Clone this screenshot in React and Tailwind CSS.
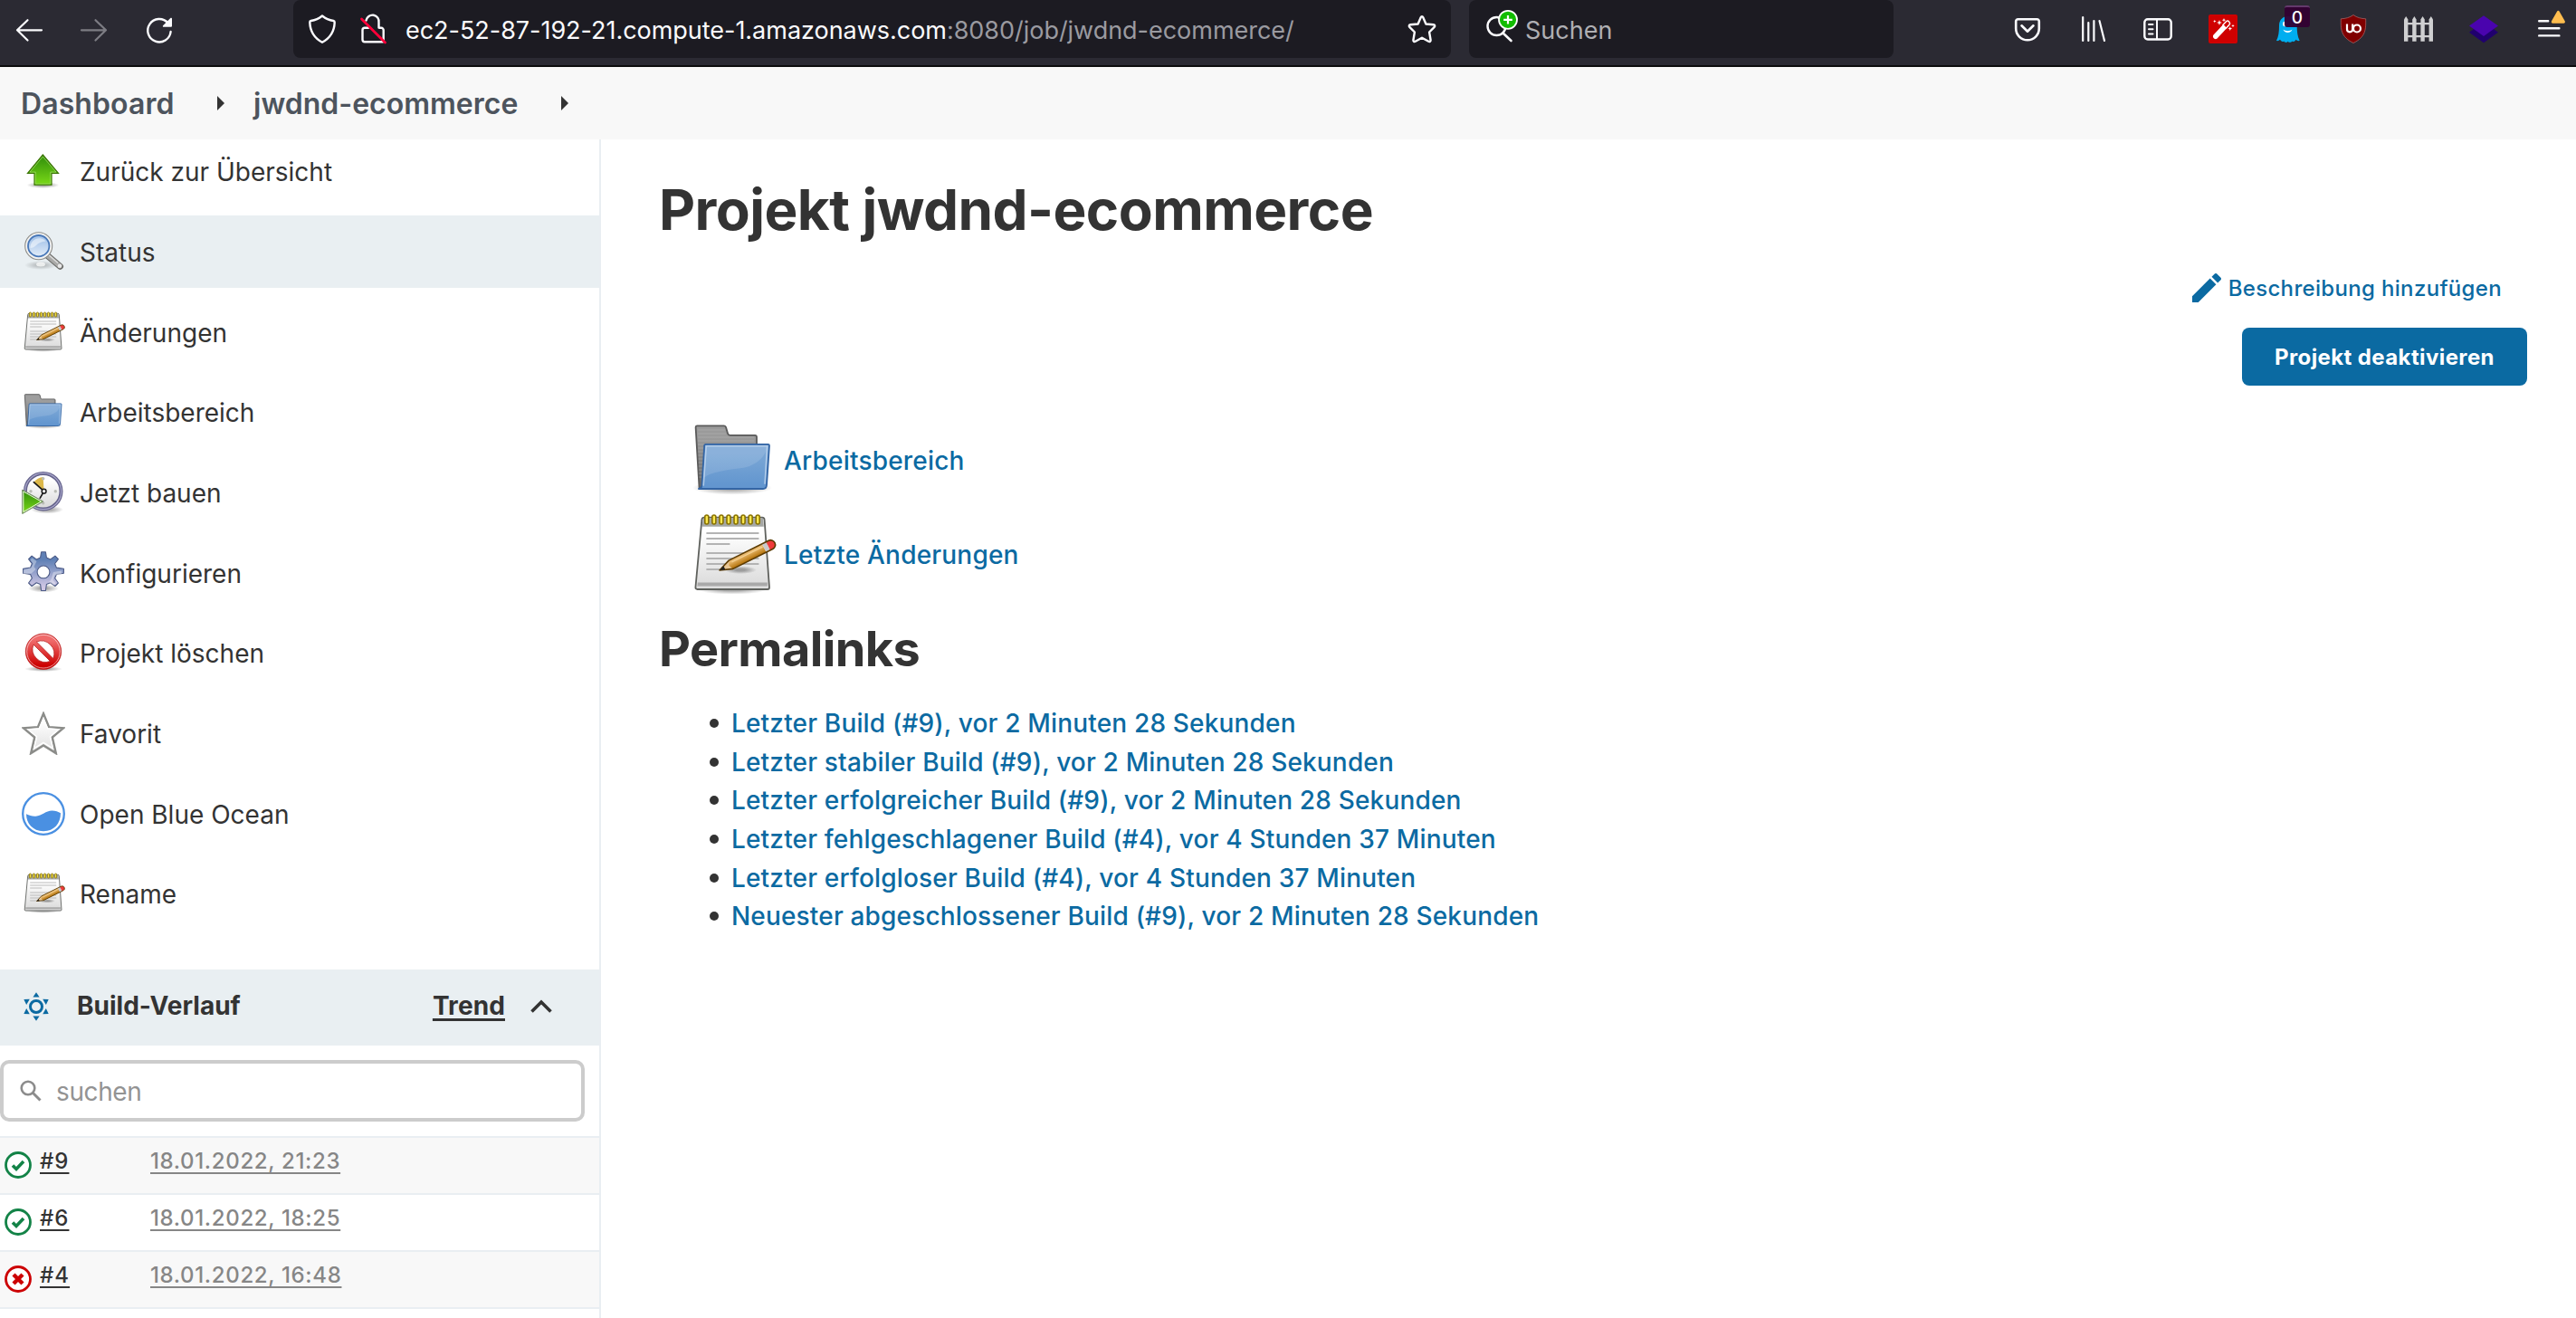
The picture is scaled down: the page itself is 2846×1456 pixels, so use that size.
import React from "react";

/* ---------- Browser toolbar icons ---------- */

const line = { fill: "none", stroke: "#fbfbfe", strokeWidth: 2.2, strokeLinecap: "round", strokeLinejoin: "round" };

function BarIcon({ children, className = "" }) {
  return (
    <svg viewBox="0 0 32 32" className={`size-8 shrink-0 overflow-visible ${className}`} aria-hidden="true">
      {children}
    </svg>
  );
}

const BackIcon = () => (
  <BarIcon><path {...line} d="M30 17.3H3M14.5 6.2 3 17.3l11.5 11.2" /></BarIcon>
);
const ForwardIcon = () => (
  <BarIcon className="opacity-40"><path {...line} d="M2 17.3h27M17.5 6.2 29 17.3 17.5 28.5" /></BarIcon>
);
const ReloadIcon = () => (
  <BarIcon>
    <path {...line} strokeWidth="2.4" d="M28.6 19a12.7 12.7 0 1 1-3.2-9.8" />
    <path fill="#fbfbfe" d="M30 4.6v8.2a1 1 0 0 1-1 1h-8.2c-.9 0-1.3-1-.7-1.6l8.2-8.2c.6-.6 1.7-.2 1.7.6z" />
  </BarIcon>
);
const ShieldIcon = () => (
  <BarIcon><path {...line} strokeWidth="2.4" d="M16 1.5c-3.8 3.1-8 4.8-12.5 5.5-.8.2-1.3.8-1.2 1.7.3 9.4 4.5 17 13.7 22 9.2-5 13.4-12.6 13.7-22 0-.9-.5-1.5-1.3-1.7C23.9 6.3 19.8 4.6 16 1.5z" /></BarIcon>
);
const LockIcon = () => (
  <BarIcon>
    <path {...line} strokeWidth="2.4" d="M8.5 6.5A7 7 0 0 1 22.5 9v5.5M23 14.8h2.2a2.5 2.5 0 0 1 2.5 2.5V28M27 30.3H7a2.5 2.5 0 0 1-2.500-2.500V17.300A2.500 2.500 0 0 1 7 14.800h4" />
    <path d="M3.500 5 29.500 31" stroke="#ff0039" strokeWidth="2.8" strokeLinecap="round" />
  </BarIcon>
);
const StarIcon = () => (
  <BarIcon><path {...line} strokeWidth="2.4" d="M14.700 3.200c.6-1.200 2-1.200 2.600 0l3.100 7.300 8.300.8c1.500.2 2 1.500 1 2.500l-5.600 5.700 1.500 8.700c.2 1.400-1 2.300-2.300 1.600L16 25.700l-7.300 4.100c-1.300.7-2.500-.2-2.300-1.600l1.500-8.700-5.600-5.700c-1-1-.5-2.300 1-2.500l8.300-.8z" /></BarIcon>
);
const SearchAddIcon = () => (
  <svg viewBox="0 0 40 40" className="size-10 shrink-0 overflow-visible" aria-hidden="true">
    <circle cx="13.500" cy="17" r="10" fill="none" stroke="#fbfbfe" strokeWidth="2.400" />
    <path d="m20.500 24.500 9 8.500" stroke="#fbfbfe" strokeWidth="2.600" strokeLinecap="round" />
    <circle cx="26" cy="9.800" r="10" fill="#12bc00" stroke="#fff" strokeWidth="1.800" />
    <path d="M26 5v9.600M21.200 9.800h9.600" stroke="#fff" strokeWidth="2.200" />
  </svg>
);
const PocketIcon = () => (
  <BarIcon>
    <path {...line} strokeWidth="2.600" d="M5.500 5.300h21a2.300 2.300 0 0 1 2.300 2.300V15.500a12.800 12.800 0 0 1-25.600 0V7.600a2.300 2.300 0 0 1 2.300-2.300z" />
    <path {...line} strokeWidth="2.600" d="m9.500 12.300 6.500 6.400 6.500-6.400" />
  </BarIcon>
);
const LibraryIcon = () => (
  <BarIcon><path {...line} d="M5.200 3v26M11.300 9v20M17.400 7v22M23.500 7l5.500 22" /></BarIcon>
);
const SidebarIcon = () => (
  <BarIcon>
    <rect {...line} strokeWidth="2.400" x="1.300" y="5.200" width="29.400" height="22.300" rx="3.500" />
    <path {...line} strokeWidth="2" d="M15 5.500v21.800M6 11h4.500M6 16.300h4.500M6 21.600h4.500" />
  </BarIcon>
);
const WandIcon = () => (
  <BarIcon>
    <rect width="32" height="32" rx="2" fill="#cf0000" />
    <path d="m5.300 22.700 11.200-12 4 4-11.200 12c-2.500 1.600-5.400-1.300-4-4z" fill="#fff" />
    <path d="m16 11.500 3.800-4c1.900-1.500 4.800 1.400 3.200 3.700l-3.700 4z" fill="#cf0000" stroke="#fff" strokeWidth="1.400" />
    <path fill="#fff" d="m12 6 .8 2.200 2.200.8-2.200.8L12 12l-.8-2.200L9 9l2.200-.8zM17 4l.6 1.600 1.600.6-1.600.6L17 8.400l-.6-1.600-1.600-.6 1.600-.6zM6.800 5.800l.5 1.200 1.200.5-1.200.5-.5 1.200L6.300 8l-1.200-.5L6.300 7zM23.800 13.200l.7 1.700 1.700.7-1.700.7-.7 1.700-.7-1.700-1.700-.7 1.700-.7zM27 10.700l.5 1.300 1.300.5-1.300.5-.5 1.300-.5-1.300-1.300-.5 1.300-.5z" />
  </BarIcon>
);
function GhostIcon() {
  return (
    <div className="relative size-8 shrink-0">
      <BarIcon>
        <path fill="#00aef0" d="M16 2c-6.500 0-10 4.500-10 10.500 0 6-.5 11.500-3 16.500 1.700.5 3-.4 4-1.300 1 1.700 2.700 3 4.400 1.700.8 1.800 3 2 4.300.3 1.400 1.700 3.500 1.500 4.500-.3 1.500 1.300 3.500.2 4.300-1.700 1 1 2.300 1.800 4.200 1.300-2.500-5-3-10.500-3-16.500C25.700 6.500 22.500 2 16 2z" />
        <ellipse cx="12" cy="10.500" rx="1.900" ry="2.800" fill="#fff" />
        <path d="M10.500 16.500c1 4.500 9 4.500 10 0-2.500 2.300-7.500 2.300-10 0z" fill="#fff" />
      </BarIcon>
      <span className="absolute -top-[10px] left-3 flex h-6 w-7 items-center justify-center rounded-[3px] border-t-2 border-[#63396b] bg-[#330033]/95 text-[19px] leading-none font-medium text-white">0</span>
    </div>
  );
}
const UblockIcon = () => (
  <BarIcon>
    <path fill="#800000" stroke="#b56a6a" strokeWidth=".7" d="M16 .5c4 3 8.500 4 13.700 4.300 0 10.500.8 19.700-13.700 26.700C1.500 24.500 2.300 15.300 2.300 4.800 7.500 4.500 12 3.500 16 .5z" />
    <path fill="none" stroke="#fff" strokeWidth="2.200" d="M9 10.500v5.800c0 4 6.200 4 6.200 0v-5.800M16 15.500a4 4 0 1 0 8 0 4 4 0 1 0-8 0" />
  </BarIcon>
);
const FenceIcon = () => (
  <BarIcon>
    <g fill="#cfcfd1">
      {[0, 9.2, 18.4, 27.6].map((x) => (
        <path key={x} d={`M${x} 29.700V5.500l2.200-3.500 2.200 3.500v24.200z`} />
      ))}
      <path d="M0 9h32v2.200H0zM0 23h32v2.200H0z" />
    </g>
  </BarIcon>
);
const LayersIcon = () => (
  <BarIcon>
    <path fill="#20006e" d="m0 19.700 6-4.500h20l6 4.500-16 11.500z" />
    <path fill="#4a04ae" d="m16 1.200 16 11.400-16 11.400L0 12.600z" />
  </BarIcon>
);
const MenuIcon = () => (
  <BarIcon>
    <path {...line} strokeWidth="2.400" d="M5.200 7.200h10M5.200 15.300h22.200M5.200 23.400h22.200" />
    <path fill="#ffbd4f" d="M25-3.200c.7-1.300 2-1.300 2.700 0l6 10.500c.6 1.200 0 2.400-1.400 2.400H20.400c-1.400 0-2-1.200-1.400-2.400z" />
  </BarIcon>
);

/* ---------- Jenkins icons ---------- */

function JIcon({ large, children }) {
  return (
    <svg viewBox="0 0 48 48" className={large ? "size-24 shrink-0" : "size-12 shrink-0"} aria-hidden="true">
      {children}
    </svg>
  );
}

function Gradients() {
  const stops = {
    green: ["#3d9b0c", "#73d216"],
    lens: ["#a9c6ea", "#dbe8f7"],
    paper: ["#ffffff", "#dedede"],
    back: ["#9a9a9a", "#6c6c6c"],
    blue: ["#7ba7d6", "#6396cf"],
    gear: ["#5f80b5", "#cfc6e4"],
    red: ["#ef6a6a", "#cc0000"],
    face: ["#ffffff", "#dcdcdc"],
    star: ["#ffffff", "#e2e2e2"],
    pencil: ["#e9b96e", "#b87812"],
  };
  return (
    <svg className="absolute size-0" aria-hidden="true">
      <defs>
        {Object.entries(stops).map(([id, [a, b]]) => (
          <linearGradient key={id} id={id} x1="0" y1="0" x2="0" y2="1">
            <stop offset=".2" stopColor={a} />
            <stop offset=".9" stopColor={b} />
          </linearGradient>
        ))}
        <radialGradient id="shadow">
          <stop offset=".3" stopColor="#000" stopOpacity=".32" />
          <stop offset="1" stopColor="#000" stopOpacity="0" />
        </radialGradient>
      </defs>
    </svg>
  );
}

const UpIcon = () => (
  <JIcon>
    <ellipse cx="23.500" cy="39.500" rx="18" ry="3.500" fill="url(#shadow)" />
    <path fill="url(#green)" stroke="#3a7304" strokeWidth="1.200" d="M23.300 6 40.500 26.300H33v12.900H14V26.300H6.500z" />
    <path fill="none" stroke="#a5e070" strokeOpacity=".7" d="M23.300 8 38 25.100h-6.200V38H15.200V25.100H9z" />
  </JIcon>
);
const GlassIcon = () => (
  <JIcon>
    <ellipse cx="21" cy="39" rx="18" ry="5" fill="url(#shadow)" opacity=".6" />
    <ellipse cx="21" cy="38" rx="5" ry="2.500" fill="#fff" opacity=".7" />
    <path d="m28 28 14.500 12.300" stroke="#6b6b68" strokeWidth="7" strokeLinecap="round" />
    <path d="m28 28 14 11.800" stroke="#a9a9a7" strokeWidth="5" strokeLinecap="round" />
    <path d="m29 27 11 9.500" stroke="#dedede" strokeWidth="1.200" />
    <circle cx="42" cy="39.800" r="2.300" fill="#e8e8e8" />
    <circle cx="18.700" cy="17.700" r="15" fill="#f3f3f2" stroke="#8d8d8a" strokeWidth="1.100" />
    <circle cx="18.700" cy="17.700" r="11.700" fill="url(#lens)" stroke="#4777b8" strokeWidth="1.800" />
    <path d="M9.500 20c0-7 5-11.500 12-10.500 2 .3 4 1.500 5 3-5 .5-8 2-10.500 4.500-2 2-4 3-6.500 3z" fill="#fff" opacity=".5" />
  </JIcon>
);
const NotepadIcon = ({ large }) => (
  <JIcon large={large}>
    <ellipse cx="23.500" cy="43.200" rx="19" ry="2.600" fill="url(#shadow)" />
    <path fill="url(#paper)" stroke="#5f615d" strokeWidth=".9" strokeLinejoin="round" d="M8 3.300h32c.8 0 1.300.5 1.300 1.300L44 42c0 .6-.4 1-1 1H4.200c-.6 0-1-.4-1-1L6.700 4.600c0-.8.500-1.300 1.300-1.300z" />
    <path fill="#8f918d" opacity=".8" d="M7.300 3.900h33.300l.3 4.500H6.900z" />
    <path fill="#a9a9a9" d="M4.400 39.300h38.500v2H4.200z" />
    <path stroke="#b3b3b3" strokeWidth=".9" d="M9.200 12h29M9.200 15h29M9.200 18h13M9.200 23h29M9.200 26h29M9.200 29h29M9.200 32h10" />
    {[0, 1, 2, 3, 4, 5, 6, 7].map((i) => (
      <rect key={i} x={8.4 + i * 4.03} y="2" width="2" height="5" rx="1" fill="#fce94f" stroke="#8a7300" strokeWidth=".8" />
    ))}
    <ellipse cx="28" cy="32.300" rx="9" ry="2.200" fill="url(#shadow)" />
    <g transform="translate(16.500 32.500) rotate(-26.500)">
      <path fill="#e9c795" d="m0 0 7-2.500v5z" />
      <path fill="url(#pencil)" d="M7-2.600h20.500v5.200H7L5.800 0z" />
      <path fill="#c9c9cb" d="M27.500-2.600H30v5.200h-2.500z" />
      <path fill="#ef3b3b" d="M30-2.600h1.500a2.500 2.500 0 0 1 0 5.200H30z" />
      <path fill="none" stroke="#5c3a00" strokeWidth=".8" strokeLinejoin="round" d="m0 0 7-2.600h24.500a2.500 2.500 0 0 1 0 5.200H7z" />
      <path fill="#222" d="m0 0 3-1.100v2.200z" />
      <path stroke="#fbe0aa" strokeWidth=".6" opacity=".7" d="M8-1h19" />
    </g>
  </JIcon>
);
const FolderIcon = ({ large }) => (
  <JIcon large={large}>
    <ellipse cx="23.500" cy="39" rx="22" ry="3.800" fill="url(#shadow)" />
    <path fill="url(#back)" stroke="#5a5a5a" strokeWidth=".9" strokeLinejoin="round" d="M4 4.700h15c.7 0 .9.400 1.100 1l.9 3.200c.2.700.6 1 1.200 1H36c.6 0 1 .3 1 1v28.500H5.300L3.300 5.500c0-.5.200-.8.700-.8z" />
    <path stroke="#bdbdbd" strokeOpacity=".45" strokeWidth=".6" d="M4.500 7h15M4.500 9h15.500M4.500 11h31M4.500 13h31M4.500 15h4M4.600 17h3.500M4.600 19h3.300M4.700 21h3.200M4.800 23h3M4.800 25h2.800M4.900 27h2.500M5 29h2.300M5 31h2.200M5.100 33h2" />
    <path fill="url(#blue)" stroke="#3465a4" strokeWidth=".9" strokeLinejoin="round" d="M8.900 14.900h34.400c.4 0 .7.300.7.700L42.500 37.500c-.1 1.200-.9 2-2 2H5c1-.2 1.600-.8 1.700-1.800L8.100 15.700c0-.5.300-.8.800-.8z" />
    <path fill="#fff" opacity=".12" d="M9 16h34c-1 6-7 11-14 12-8 1-17 2-21.300 5.500z" />
    <path fill="none" stroke="#c5d9f0" strokeOpacity=".75" strokeWidth=".8" d="m7.600 37.800 1.500-21.900h33.700l-1.300 21" />
  </JIcon>
);
const BuildIcon = () => (
  <JIcon>
    <ellipse cx="28" cy="43" rx="18" ry="4.500" fill="url(#shadow)" />
    <circle cx="23.700" cy="22.700" r="19.800" fill="url(#face)" stroke="#65638c" strokeWidth="4" />
    <circle cx="23.700" cy="22.700" r="20" fill="none" stroke="#aaa8cc" strokeWidth="1.200" />
    <path fill="#dcb84a" d="M24.500 22.700 13.300 12.700A15 15 0 0 1 23.700 7z" />
    <g fill="#babdb6"><circle cx="23.700" cy="8.700" r="1.700" /><circle cx="37.300" cy="22.700" r="1.700" /><circle cx="23.700" cy="35.700" r="1.700" /><circle cx="10" cy="22.700" r="1.700" /></g>
    <path d="M24.600 22.700 13.300 12.700M24.600 22.700l-4.300 7.500" stroke="#1a1a1a" strokeWidth="1.700" strokeLinecap="round" />
    <circle cx="24.600" cy="22.700" r="2.400" fill="#f3f3f3" stroke="#1a1a1a" strokeWidth="1.500" />
    <path fill="url(#green)" stroke="#7c8a74" strokeWidth="1" d="M.7 21v26.500L23.700 34z" />
    <path fill="none" stroke="#eef7e6" d="M1.800 22.900v22.600L21.500 34z" />
  </JIcon>
);
const GearIcon = () => (
  <JIcon>
    <ellipse cx="24" cy="41" rx="17" ry="4.500" fill="url(#shadow)" />
    <path
      fill="url(#gear)" fillRule="evenodd" stroke="#4b5a86" strokeWidth="1.100" strokeLinejoin="round"
      d="M21.600.8h4.800l1 6.300 4.300 1.800 5.200-3.800 3.500 3.500-3.800 5.200 1.800 4.300 8 1.200v5l-8 1.200-1.800 4.300 3.800 5.200-3.500 3.500-5.200-3.800-4.300 1.800-1 7h-4.800l-1-7-4.300-1.800-5.200 3.800-3.500-3.500 3.800-5.200-1.800-4.300-8-1.200v-5l8-1.200 1.800-4.300-3.800-5.200 3.500-3.500 5.200 3.800 4.300-1.800zM24 16a6.900 6.900 0 1 0 0 13.800A6.900 6.900 0 0 0 24 16z"
    />
    <path fill="#fff" opacity=".35" d="M2 20.500 10.500 18l2-4.500-3-4 2-2 5 3.500-3 6 2 3-5 4.500-8.500 1zM30 34c4-3 3-7 5-11l9-1.500v4l-7.500 1-2 5 3 4-2 2z" />
  </JIcon>
);
const DeleteIcon = () => (
  <JIcon>
    <ellipse cx="24" cy="42" rx="21" ry="3" fill="url(#shadow)" />
    <path fill="url(#red)" fillRule="evenodd" stroke="#b01010" strokeWidth=".7" d="M24 3a19.700 19.700 0 1 0 0 39.400A19.700 19.700 0 0 0 24 3zM13 15l18.400 18.400A14.200 14.200 0 0 1 13 15zm3.400-3A14.200 14.200 0 0 1 34.800 30.400z" />
    <circle cx="24" cy="22.700" r="18.300" fill="none" stroke="#fff" strokeOpacity=".55" strokeWidth="1" />
  </JIcon>
);
const FavIcon = () => (
  <JIcon>
    <path fill="url(#star)" stroke="#8b8c89" strokeWidth="2.600" strokeLinejoin="miter" d="m24 2.500 6 14.700 16 1.100-12.300 10.200 4 17.500L24 37.500 10.300 46l4-17.500L2 18.300l16-1.100z" />
    <path fill="none" stroke="#fff" strokeWidth="1.500" d="m24 7.500 4.700 11.300 12.300 1-9.500 8 3 13-10.500-6.500-10.500 6.500 3-13-9.500-8 12.300-1z" />
  </JIcon>
);
const OceanIcon = () => (
  <JIcon>
    <circle cx="24" cy="24" r="22.800" fill="#fff" stroke="#4a90e2" strokeWidth="2.300" />
    <path fill="#4a90e2" d="M5 24.300c3.500 1.700 7 2.800 10.500 2.500 7-.6 11-6.300 18-6.300 3.500 0 7 1.200 9.500 2.700 0 11-7 20-19 20S5 34.500 5 24.300z" />
  </JIcon>
);

const PencilIcon = () => (
  <svg viewBox="0 0 32 32" className="size-8 shrink-0" aria-hidden="true">
    <path fill="#0b6aa2" d="M0 32v-6.700L19.700 5.600l6.700 6.700L6.700 32zM31.500 7.200l-3.300 3.300-6.700-6.700L24.800.5c.7-.7 1.800-.7 2.500 0l4.200 4.200c.7.700.7 1.800 0 2.500z" />
  </svg>
);

const SunIcon = () => (
  <svg viewBox="0 0 28 32" className="h-8 w-7 shrink-0 -translate-y-px" aria-hidden="true">
    <circle cx="14" cy="16" r="6.500" fill="none" stroke="#0b6aa2" strokeWidth="3" />
    <g fill="#0b6aa2">
      {[0, 60, 120, 180, 240, 300].map((a) => (
        <path key={a} transform={`rotate(${a} 14 16)`} d="m14 .2 3.600 5.400h-7.200z" />
      ))}
    </g>
  </svg>
);

function StatusIcon({ ok }) {
  const c = ok ? "#138347" : "#cc0003";
  return (
    <svg viewBox="0 0 30 30" className="size-[30px] shrink-0" aria-hidden="true">
      <circle cx="15" cy="15" r="13.500" fill="#fff" stroke={c} strokeWidth="2.800" />
      {ok ? (
        <path d="m9 15.500 4 4 8-8.500" fill="none" stroke={c} strokeWidth="3.600" />
      ) : (
        <path d="m10 10 10 10M20 10 10 20" fill="none" stroke={c} strokeWidth="4.400" />
      )}
    </svg>
  );
}

/* ---------- Page ---------- */

function Toolbar() {
  return (
    <header className="flex h-[74px] items-start border-b-2 border-[#0c0c0d] bg-[#2b2a33]">
      <div className="flex h-16 items-center gap-10 pl-4">
        <BackIcon />
        <ForwardIcon />
        <ReloadIcon />
      </div>
      <div className="ml-[132px] flex h-16 w-[1279px] items-center rounded-lg bg-[#1c1b22] px-4">
        <div className="flex gap-6">
          <ShieldIcon />
          <LockIcon />
        </div>
        <span className="ml-5 translate-y-0.5 text-[27px] leading-8 tracking-[-0.03px] text-[#fbfbfe]">
          ec2-52-87-192-21.compute-1.amazonaws.com<span className="text-[#9a9aa0]">:8080/job/jwdnd-ecommerce/</span>
        </span>
        <div className="ml-auto"><StarIcon /></div>
      </div>
      <div className="ml-5 flex h-16 w-[469px] items-center gap-[5px] rounded-lg bg-[#1c1b22] pl-[17px]">
        <SearchAddIcon />
        <span className="translate-y-0.5 text-[27px] leading-8 text-[#afafb3]">Suchen</span>
      </div>
      <div className="ml-auto flex h-16 items-center gap-10 pr-[14px]">
        <PocketIcon />
        <LibraryIcon />
        <SidebarIcon />
        <WandIcon />
        <GhostIcon />
        <UblockIcon />
        <FenceIcon />
        <LayersIcon />
        <MenuIcon />
      </div>
    </header>
  );
}

const Caret = () => (
  <svg viewBox="0 0 8 16" className="h-4 w-2 shrink-0" aria-hidden="true"><path fill="#333" d="m0 0 8 8-8 8z" /></svg>
);

function Breadcrumbs() {
  return (
    <nav className="flex h-20 items-center bg-[#f8f8f8] pl-[23px] text-[32px] leading-10 font-semibold text-[#4d545d]">
      <a className="w-[217px] translate-y-px tracking-[0.1px]">Dashboard</a>
      <Caret />
      <a className="ml-8 w-[340px] translate-y-px">jwdnd-ecommerce</a>
      <Caret />
    </nav>
  );
}

const tasks = [
  ["Zurück zur Übersicht", UpIcon],
  ["Status", GlassIcon],
  ["Änderungen", NotepadIcon],
  ["Arbeitsbereich", FolderIcon],
  ["Jetzt bauen", BuildIcon],
  ["Konfigurieren", GearIcon],
  ["Projekt löschen", DeleteIcon],
  ["Favorit", FavIcon],
  ["Open Blue Ocean", OceanIcon],
  ["Rename", NotepadIcon],
];

const builds = [
  ["#9", "18.01.2022, 21:23", true],
  ["#6", "18.01.2022, 18:25", true],
  ["#4", "18.01.2022, 16:48", false],
];

function Sidebar() {
  return (
    <aside className="w-[664px] shrink-0 border-r-2 border-[#e9eef2] text-[#333]">
      <ul className="-mt-[4.7px] flex flex-col gap-[8.67px]">
        {tasks.map(([label, Icon]) => (
          <li key={label} className={`flex h-20 items-center gap-4 pl-6 text-[28px] leading-10 ${label === "Status" ? "bg-[#e9eff2]" : ""}`}>
            <Icon />
            <span className="translate-y-[0.5px]">{label}</span>
          </li>
        ))}
      </ul>

      <div className="mt-[43.7px] flex h-[84px] items-center bg-[#e9eff2] pr-[52px] pl-[26px] text-[28px] leading-10 font-bold">
        <SunIcon />
        <span className="ml-[31px] -translate-y-[2px]">Build-Verlauf</span>
        <a className="ml-auto -translate-y-[2px] tracking-[0.1px] underline decoration-[3px] underline-offset-[4px]">Trend</a>
        <svg viewBox="0 0 24 15" className="ml-7 h-[15px] w-6 -translate-y-px" aria-hidden="true"><path d="M1.500 13.500 12 3l10.500 10.500" fill="none" stroke="#333" strokeWidth="3.600" /></svg>
      </div>

      <div className="my-4 flex h-[68px] w-[646px] items-center rounded-[10px] border-4 border-[#ccc] pl-[18px]">
        <svg viewBox="0 0 24 24" className="size-6 shrink-0" aria-hidden="true">
          <circle cx="9" cy="9" r="7.300" fill="none" stroke="#8c8c8c" strokeWidth="2.600" />
          <path d="m14 14 8.500 8.500" stroke="#8c8c8c" strokeWidth="3" />
        </svg>
        <span className="ml-4 translate-y-px text-[28px] leading-10 tracking-[-0.4px] text-[#939393]">suchen</span>
      </div>

      <div className="border-b-2 border-[#e9eef2]">
        {builds.map(([id, date, ok], i) => (
          <div key={id} className={`flex h-[63px] items-center border-t-2 border-[#e9eef2] pl-[5px] text-[24px] leading-8 ${i % 2 ? "" : "bg-[#f8f8f8]"}`}>
            <StatusIcon ok={ok} />
            <a className="ml-[9px] w-[122px] -translate-y-1"><span className="font-medium tracking-[1px] underline decoration-2 underline-offset-[4px]">{id}</span></a>
            <a className="-translate-y-1 font-medium tracking-[0.65px] text-[#868686] underline decoration-2 underline-offset-[4px]">{date}</a>
          </div>
        ))}
      </div>
    </aside>
  );
}

const permalinks = [
  "Letzter Build (#9), vor 2 Minuten 28 Sekunden",
  "Letzter stabiler Build (#9), vor 2 Minuten 28 Sekunden",
  "Letzter erfolgreicher Build (#9), vor 2 Minuten 28 Sekunden",
  "Letzter fehlgeschlagener Build (#4), vor 4 Stunden 37 Minuten",
  "Letzter erfolgloser Build (#4), vor 4 Stunden 37 Minuten",
  "Neuester abgeschlossener Build (#9), vor 2 Minuten 28 Sekunden",
];

function Main() {
  return (
    <main className="flex-1 pt-[38px] pr-[54px] pl-16">
      <h1 className="text-[62px] leading-20 font-bold tracking-[-0.57px] text-[#333]">Projekt jwdnd-ecommerce</h1>

      <div className="mt-[26px] flex flex-col items-end text-[24px] leading-10">
        <a className="flex items-center gap-2 pr-[28px] font-medium tracking-[0.33px] text-[#0b6aa2]">
          <PencilIcon />
          <span className="translate-y-px">Beschreibung hinzufügen</span>
        </a>
        <button className="mt-6 flex h-16 w-[315px] items-center justify-center rounded-lg bg-[#0b6aa2] font-bold tracking-[0.39px] text-white">
          <span className="translate-y-px">Projekt deaktivieren</span>
        </button>
      </div>

      <div className="mt-[35px] ml-[34px] flex flex-col gap-2 text-[28px] leading-10 font-medium tracking-[0.2px] text-[#0b6aa2]">
        <a className="flex items-center gap-2"><FolderIcon large />Arbeitsbereich</a>
        <a className="flex items-center gap-2"><NotepadIcon large />Letzte Änderungen</a>
      </div>

      <h2 className="mt-4 text-[54px] leading-20 font-bold tracking-[-0.6px] text-[#333]">Permalinks</h2>

      <ul className="mt-[21px] ml-[56px] text-[28px] font-medium tracking-[0.17px] text-[#0b6aa2]">
        {permalinks.map((p) => (
          <li key={p} className="flex h-[42.6px] items-center gap-[14px]">
            <span className="size-[10px] rounded-full bg-[#333]" />
            <a className="leading-10">{p}</a>
          </li>
        ))}
      </ul>
    </main>
  );
}

export default function App() {
  return (
    <div className="relative flex h-[1456px] w-[2846px] flex-col overflow-hidden bg-white font-[Inter,sans-serif]">
      <Gradients />
      <Toolbar />
      <Breadcrumbs />
      <div className="flex min-h-0 flex-1">
        <Sidebar />
        <Main />
      </div>
    </div>
  );
}
